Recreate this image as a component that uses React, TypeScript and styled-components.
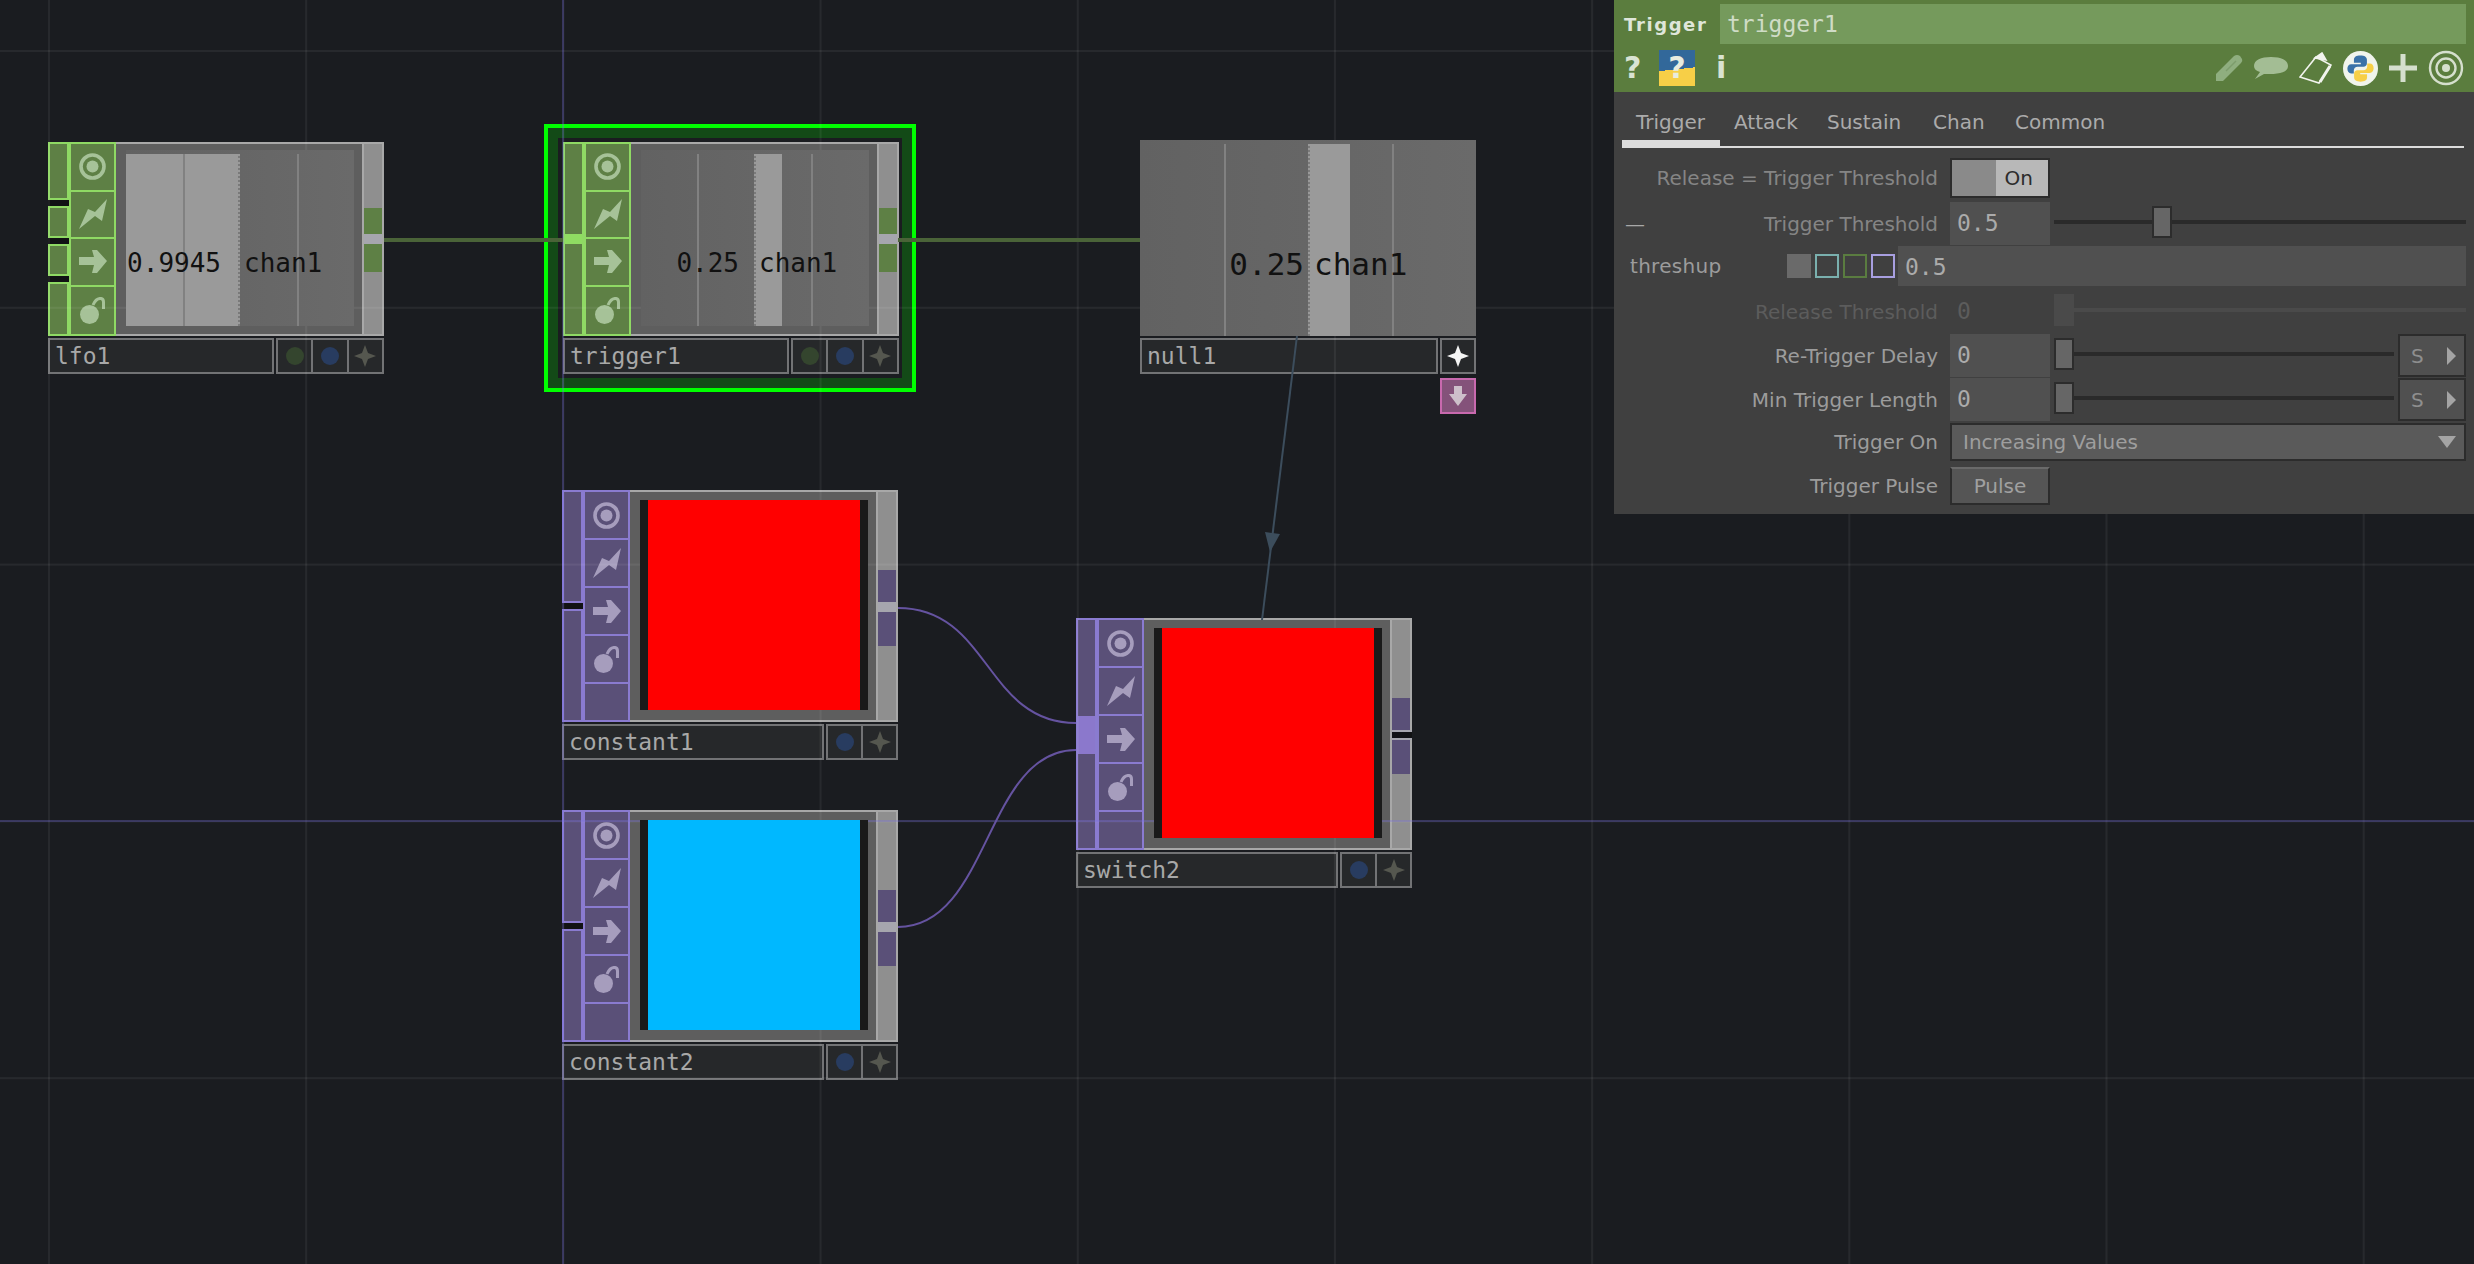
import React from 'react'
import styled, { createGlobalStyle, css } from 'styled-components'

const MONO = `"DejaVu Sans Mono", "Liberation Mono", monospace`
const SANS = `"DejaVu Sans", "Liberation Sans", sans-serif`

type Family = 'chop' | 'top'

const palette = {
  chop: { line: '#8fd964', fill: '#5e8045', lit: '#8fdc62', glyph: '#a6c298' },
  top: { line: '#8a7bd0', fill: '#5a5078', lit: '#8b78cc', glyph: '#a69dbd' },
}

const GlobalStyle = createGlobalStyle`
  html, body {
    margin: 0;
    padding: 0;
    background: #1a1c20;
    overflow: hidden;
  }
`

const Canvas = styled.div`
  position: relative;
  width: 2474px;
  height: 1264px;
  overflow: hidden;
  background: #1a1c20;
`

const GridLines = styled.div`
  position: absolute;
  inset: 0;
  z-index: 2;
  pointer-events: none;
  background-image:
    linear-gradient(to right, rgba(110, 100, 220, 0.3), rgba(110, 100, 220, 0.3)),
    linear-gradient(to right, rgba(110, 100, 220, 0.3), rgba(110, 100, 220, 0.3)),
    linear-gradient(to right, rgba(255, 255, 255, 0.06) 2px, transparent 2px),
    linear-gradient(to bottom, rgba(255, 255, 255, 0.06) 2px, transparent 2px);
  background-size: 2px 100%, 100% 2px, 257.2px 100%, 100% 256.8px;
  background-position: 562px 0, 0 820px, 48px 0, 0 50px;
  background-repeat: no-repeat, no-repeat, repeat, repeat;
`

const Wires = styled.svg`
  position: absolute;
  inset: 0;
  z-index: 2;
  pointer-events: none;
`

const SelectionFrame = styled.div`
  position: absolute;
  left: 544px;
  top: 124px;
  width: 372px;
  height: 268px;
  box-sizing: border-box;
  border: 4px solid #00ff00;
  background: #134a17;
  &::before {
    content: '';
    position: absolute;
    inset: 10px;
    background: #1a1c20;
  }
`

const Node = styled.div<{ $x: number; $y: number }>`
  position: absolute;
  left: ${p => p.$x}px;
  top: ${p => p.$y}px;
  width: 336px;
`

const Body = styled.div<{ $h: number }>`
  display: flex;
  height: ${p => p.$h}px;
`

const InputColumn = styled.div<{ $gap: number }>`
  flex: none;
  width: 21px;
  display: flex;
  flex-direction: column;
  gap: ${p => p.$gap}px;
  background: #111214;
`

const InputSlot = styled.div<{ $family: Family; $h?: number; $part?: 'first' | 'mid' | 'last' }>`
  box-sizing: border-box;
  width: 21px;
  ${p => (p.$h ? `height: ${p.$h}px;` : 'flex: 1;')}
  background: ${p => (p.$part === 'mid' ? palette[p.$family].lit : palette[p.$family].fill)};
  border: 2px solid ${p => palette[p.$family].line};
  ${p => p.$part === 'first' && 'border-bottom: 0;'}
  ${p => p.$part === 'mid' && 'border-top: 0; border-bottom: 0;'}
  ${p => p.$part === 'last' && 'border-top: 0;'}
`

const IconColumn = styled.div<{ $family: Family }>`
  box-sizing: border-box;
  flex: none;
  width: 47px;
  display: flex;
  flex-direction: column;
  gap: 2px;
  background: ${p => palette[p.$family].line};
  border: 2px solid ${p => palette[p.$family].line};
  border-left-width: 0;
  color: ${p => palette[p.$family].glyph};
`

const IconCell = styled.div<{ $family: Family; $grow?: boolean }>`
  ${p => (p.$grow ? 'flex: 1;' : `height: ${p.$family === 'top' ? 46 : 45.5}px;`)}
  display: flex;
  align-items: center;
  justify-content: center;
  background: ${p => palette[p.$family].fill};
  border-left: 2px solid ${p => palette[p.$family].line};
`

const ViewerArea = styled.div`
  box-sizing: border-box;
  flex: 1;
  background: #5e5e5e;
  border-top: 2px solid #a8a8a8;
  border-bottom: 2px solid #a8a8a8;
  padding: 6px 8px 8px 10px;
  display: flex;
`

const Chart = styled.div`
  position: relative;
  z-index: 3;
  flex: 1;
  overflow: hidden;
  background: linear-gradient(to right, #626262, #6a6a6a);
  font-family: ${MONO};
  color: #111;
`

const ChartBar = styled.div<{ $left: number; $w: number; $edge: 'left' | 'right' }>`
  position: absolute;
  top: 4px;
  bottom: 0;
  left: ${p => p.$left}px;
  width: ${p => p.$w}px;
  background: #9a9a9a;
  &::after {
    content: '';
    position: absolute;
    top: 0;
    bottom: 0;
    ${p => p.$edge}: 0;
    width: 2px;
    background: repeating-linear-gradient(to bottom, #9a9a9a 0 2px, #7a7a7a 2px 4px);
  }
`

const ChartMark = styled.div<{ $left: number }>`
  position: absolute;
  top: 4px;
  bottom: 0;
  left: ${p => p.$left}px;
  width: 2px;
  background: #818181;
`

const ChartText = styled.div<{ $large?: boolean }>`
  position: absolute;
  left: 0;
  top: ${p => (p.$large ? 104 : 95)}px;
  display: flex;
  font-size: ${p => (p.$large ? 31 : 26)}px;
  line-height: ${p => (p.$large ? 40 : 36)}px;
  white-space: pre;
`

const ChartValue = styled.span<{ $w: number }>`
  box-sizing: border-box;
  width: ${p => p.$w}px;
  text-align: right;
`

const ChartChan = styled.span<{ $gap: number }>`
  margin-left: ${p => p.$gap}px;
`

const Swatch = styled.div<{ $color: string }>`
  position: relative;
  z-index: 3;
  flex: 1;
  margin: 2px 0;
  background: #1a1a1a;
  padding: 0 8px;
  display: flex;
  &::after {
    content: '';
    flex: 1;
    background: ${p => p.$color};
  }
`

const OutputStrip = styled.div`
  box-sizing: border-box;
  flex: none;
  width: 22px;
  display: flex;
  flex-direction: column;
  align-items: stretch;
  background: #8f8f8f;
  border: 2px solid #a8a8a8;
`

const OutputPort = styled.div<{ $family: Family; $top: number; $h: number }>`
  margin-top: ${p => p.$top}px;
  height: ${p => p.$h}px;
  background: ${p => palette[p.$family].fill};
`

const PortGap = styled.div<{ $dark?: boolean; $h: number }>`
  box-sizing: border-box;
  height: ${p => p.$h}px;
  ${p =>
    p.$dark
      ? css`
          margin-right: -2px;
          background: #111214;
          border-top: 2px solid #a6a6ae;
          border-bottom: 2px solid #a6a6ae;
        `
      : css`
          background: #a6a6ae;
        `}
`

const NameRow = styled.div`
  display: flex;
  gap: 2px;
  height: 36px;
  margin-top: 2px;
`

const NameField = styled.div`
  box-sizing: border-box;
  flex: 1;
  padding-left: 5px;
  border: 2px solid #727375;
  background: #26282a;
  color: #a8a8a8;
  font-family: ${MONO};
  font-size: 23px;
  line-height: 33px;
`

const ButtonBox = styled.div<{ $n: number }>`
  box-sizing: border-box;
  width: ${p => p.$n * 36}px;
  display: flex;
  border: 2px solid #727375;
  background: #26282a;
`

const ButtonCell = styled.div`
  flex: 1;
  display: flex;
  align-items: center;
  justify-content: center;
  & + & {
    border-left: 2px solid #727375;
  }
`

const Dot = styled.span<{ $color: string }>`
  width: 18px;
  height: 18px;
  border-radius: 50%;
  background: ${p => p.$color};
`

const ViewerButton = styled.div`
  box-sizing: border-box;
  width: 36px;
  height: 36px;
  margin: 4px 0 0 auto;
  display: flex;
  align-items: center;
  justify-content: center;
  background: #84527a;
  border: 2px solid #c869ae;
  color: #cdbfca;
`

/* panel */

const Panel = styled.div`
  position: absolute;
  z-index: 5;
  left: 1614px;
  top: 0;
  width: 860px;
  height: 514px;
  background: #404040;
  font-family: ${SANS};
`

const PanelHeader = styled.div`
  height: 92px;
  box-sizing: border-box;
  padding: 4px 8px 0 10px;
  background: #5b7d3e;
`

const TitleRow = styled.div`
  display: flex;
  align-items: center;
  height: 40px;
`

const TypeName = styled.div`
  width: 96px;
  color: #dfe6da;
  font-size: 18px;
  font-weight: bold;
  letter-spacing: 1.6px;
`

const OpName = styled.div`
  flex: 1;
  height: 40px;
  padding-left: 7px;
  background: #759a5c;
  color: #cfdcc6;
  font-family: ${MONO};
  font-size: 23px;
  line-height: 41px;
`

const ToolRow = styled.div`
  display: flex;
  align-items: center;
  height: 40px;
  margin-top: 4px;
  color: #d9e3d2;
`

const HelpMark = styled.span`
  width: 35px;
  font-size: 30px;
  font-weight: bold;
  line-height: 36px;
`

const PythonHelp = styled.span`
  width: 36px;
  height: 36px;
  margin-right: 21px;
  text-align: center;
  font-size: 30px;
  font-weight: bold;
  line-height: 36px;
  color: #e8ecdf;
  background: linear-gradient(174deg, #32689a 0 53%, #f7cf47 53% 100%);
`

const InfoMark = styled.span`
  font-size: 30px;
  font-weight: bold;
  line-height: 36px;
`

const ToolIcons = styled.div`
  margin-left: auto;
  margin-right: 2px;
  display: flex;
  align-items: center;
  gap: 11px;
`

const TabBar = styled.div`
  display: flex;
  height: 48px;
  margin: 0 10px 0 8px;
  border-bottom: 2px solid #dcdcdc;
  box-sizing: content-box;
  padding-top: 6px;
`

const Tab = styled.div<{ $active?: boolean; $w: number }>`
  position: relative;
  width: ${p => p.$w}px;
  box-sizing: border-box;
  padding-left: 14px;
  color: #ababab;
  font-size: 20px;
  line-height: 48px;
  ${p =>
    p.$active &&
    css`
      &::after {
        content: '';
        position: absolute;
        left: 0;
        right: 0;
        bottom: 0;
        height: 6px;
        background: #dcdcdc;
      }
    `}
`

const ParamList = styled.div`
  display: flex;
  flex-direction: column;
  gap: 4px;
  margin-top: 10px;
  padding-right: 8px;
`

const Row = styled.div`
  display: grid;
  grid-template-columns: 336px 1fr;
  height: 40px;
`

const Label = styled.div<{ $tone?: 'dim' | 'off' }>`
  display: flex;
  align-items: center;
  justify-content: flex-end;
  padding-right: 12px;
  font-size: 20px;
  white-space: nowrap;
  color: ${p => (p.$tone === 'off' ? '#5c5c5c' : p.$tone === 'dim' ? '#858585' : '#9c9c9c')};
`

const Dash = styled.span`
  margin-right: auto;
  margin-left: 11px;
  color: #a8a8a8;
`

const Controls = styled.div`
  display: flex;
  align-items: stretch;
  gap: 4px;
`

const Toggle = styled.div`
  box-sizing: border-box;
  width: 100px;
  display: flex;
  border: 2px solid #2c2c2c;
`

const ToggleOff = styled.div`
  flex: 1;
  background: #8a8a8a;
`

const ToggleOn = styled.div`
  flex: 1;
  background: #b8b8b8;
  color: #2c2c2c;
  font-size: 20px;
  line-height: 36px;
  padding-left: 9px;
`

const Field = styled.div<{ $off?: boolean }>`
  box-sizing: border-box;
  width: 100px;
  padding-left: 7px;
  background: ${p => (p.$off ? 'transparent' : '#505050')};
  color: ${p => (p.$off ? '#5c5c5c' : '#ababab')};
  font-family: ${MONO};
  font-size: 23px;
  line-height: 43px;
`

const Slider = styled.div<{ $off?: boolean }>`
  position: relative;
  flex: 1;
  &::before {
    content: '';
    position: absolute;
    left: 0;
    right: 0;
    top: 18px;
    height: 4px;
    background: ${p => (p.$off ? '#4a4a4a' : '#2a2a2a')};
  }
`

const Thumb = styled.div<{ $left: number; $off?: boolean }>`
  position: absolute;
  box-sizing: border-box;
  left: ${p => p.$left}px;
  top: 4px;
  width: 20px;
  height: 32px;
  background: ${p => (p.$off ? '#4a4a4a' : '#666')};
  border: 2px solid ${p => (p.$off ? '#4a4a4a' : '#2c2c2c')};
`

const UnitButton = styled.div`
  box-sizing: border-box;
  width: 68px;
  display: flex;
  align-items: center;
  justify-content: space-between;
  padding: 0 8px 0 11px;
  background: #505050;
  border: 2px solid #2c2c2c;
  color: #8e8e8e;
  font-size: 20px;
`

const ArrowRight = styled.span`
  border-left: 9px solid #a4a4a4;
  border-top: 9px solid transparent;
  border-bottom: 9px solid transparent;
`

const ThreshRow = styled.div`
  display: flex;
  align-items: center;
  height: 40px;
  padding-left: 16px;
`

const ThreshName = styled.div`
  width: 157px;
  color: #9c9c9c;
  font-size: 20px;
  letter-spacing: 0.3px;
`

const Squares = styled.div`
  width: 111px;
  display: flex;
  gap: 4px;
`

const Square = styled.span<{ $line: string; $fill?: string }>`
  box-sizing: border-box;
  width: 24px;
  height: 24px;
  border: 2px solid ${p => p.$line};
  background: ${p => p.$fill || 'transparent'};
`

const ThreshField = styled.div`
  flex: 1;
  height: 40px;
  padding-left: 7px;
  background: #505050;
  color: #ababab;
  font-family: ${MONO};
  font-size: 23px;
  line-height: 42px;
`

const Dropdown = styled.div`
  flex: 1;
  box-sizing: border-box;
  margin: 1px 0;
  display: flex;
  align-items: center;
  justify-content: space-between;
  padding: 0 8px 0 11px;
  background: #5a5a5a;
  border: 2px solid #2c2c2c;
  color: #9e9e9e;
  font-size: 20px;
`

const ArrowDown = styled.span`
  border-top: 12px solid #a4a4a4;
  border-left: 9px solid transparent;
  border-right: 9px solid transparent;
`

const PulseButton = styled.div`
  box-sizing: border-box;
  width: 100px;
  margin: 1px 0;
  text-align: center;
  background: #555;
  border: 2px solid #2c2c2c;
  border-top-color: #6a6a6a;
  color: #a0a0a0;
  font-size: 20px;
  line-height: 34px;
`

/* drawings */

const Target = () => (
  <svg width="27" height="27" viewBox="0 0 27 27" fill="currentColor">
    <circle cx="13.5" cy="13.5" r="11.5" fill="none" stroke="currentColor" strokeWidth="3.6" />
    <circle cx="13.5" cy="13.5" r="6" />
  </svg>
)

const Bolt = () => (
  <svg width="28" height="30" viewBox="0 0 28 30" fill="currentColor">
    <path d="M0 30 L9 10 L16 13 L28 0 L23 22 L16 17 Z" />
  </svg>
)

const Arrow = () => (
  <svg width="28" height="23" viewBox="0 0 28 23" fill="currentColor">
    <path d="M0 7 H15 L13 0 H18 L28 11 L18 23 H13 L15 15 H0 Z" />
  </svg>
)

const Bomb = () => (
  <svg width="25" height="27" viewBox="0 0 25 27" fill="currentColor">
    <circle cx="9.5" cy="17.5" r="9.5" />
    <path d="M13 8 Q16 1 21 1.5 Q23.5 2 23.5 5 V12" fill="none" stroke="currentColor" strokeWidth="3" />
  </svg>
)

const Sparkle = ({ color }: { color: string }) => (
  <svg width="22" height="22" viewBox="0 0 22 22" fill={color}>
    <path d="M11 0 L14 8 L22 11 L14 14 L11 22 L8 14 L0 11 L8 8 Z" />
  </svg>
)

const DownArrow = () => (
  <svg width="18" height="20" viewBox="0 0 18 20" fill="currentColor">
    <path d="M5 0 H13 V8 H18 L9 20 L0 8 H5 Z" />
  </svg>
)

const Pencil = () => (
  <svg width="28" height="28" viewBox="0 0 28 28" fill="#8fae7f">
    <path d="M1 20 L19 2 Q22 0 25 2 L27 5 Q28 7 26 9 L8 27 H1 Z" />
    <path d="M11 17 L21 7" stroke="#7d9c6c" strokeWidth="1.5" />
  </svg>
)

const Bubble = () => (
  <svg width="34" height="26" viewBox="0 0 34 26" fill="#a3bd94">
    <path d="M17 2 C27 2 34 5 34 11 C34 17 26 19 16 19 C13 19 11 19 10 19 L1 24 L6 17 C2 16 0 14 0 11 C0 5 7 2 17 2 Z" />
  </svg>
)

const NoteIcon = () => (
  <svg width="33" height="32" viewBox="0 0 33 32" fill="none" stroke="#f2f4ee" strokeWidth="1.6">
    <path d="M17 5 L32 13 L20 31 L1 25 Z" />
    <path d="M16 6 L23 1 L27 8 Z" fill="#f2f4ee" />
    <path d="M31 14 L21 30" strokeWidth="3" />
  </svg>
)

const SNAKE =
  'M12 3 C9 3 7.5 4 7.5 6 V8 H12.2 V9 H5.6 C4 9 3 10.4 3 12.2 C3 14 4 15.4 5.6 15.4 H7.4 V13.4 C7.4 11.8 8.6 10.8 10 10.8 H14 C15.4 10.8 16.4 9.8 16.4 8.4 V6 C16.4 4 14.6 3 12 3 Z'

const PythonLogo = () => (
  <svg width="35" height="35" viewBox="0 0 24 24">
    <circle cx="12" cy="12" r="12" fill="#f0f4ec" />
    <path fill="#3a72a8" d={SNAKE} />
    <path fill="#f7cf47" transform="rotate(180 12 12)" d={SNAKE} />
  </svg>
)

const PlusIcon = () => (
  <svg width="28" height="28" viewBox="0 0 28 28" fill="#d5dfcd">
    <path d="M11.5 0 H16.5 V11.5 H28 V16.5 H16.5 V28 H11.5 V16.5 H0 V11.5 H11.5 Z" />
  </svg>
)

const Rings = () => (
  <svg width="36" height="36" viewBox="0 0 36 36" fill="none" stroke="#d5dfcd" strokeWidth="2.4">
    <circle cx="18" cy="18" r="16" />
    <circle cx="18" cy="18" r="9.5" />
    <circle cx="18" cy="18" r="4" fill="#d5dfcd" stroke="none" />
  </svg>
)

const WireLayer = () => (
  <Wires width="2474" height="1264">
    <path d="M384 240 H563" stroke="#4a6338" strokeWidth="4" fill="none" />
    <path d="M898 240 H1140" stroke="#4a6338" strokeWidth="4" fill="none" />
    <path d="M1297 336 L1262 620" stroke="#3c4d5c" strokeWidth="2" fill="none" />
    <path d="M1265 532 L1280 534 L1270 552 Z" fill="#3c4d5c" />
    <path d="M898 608 C990 608 985 723 1076 723" stroke="#6553a0" strokeWidth="2" fill="none" />
    <path d="M898 927 C990 927 985 750 1076 750" stroke="#6553a0" strokeWidth="2" fill="none" />
  </Wires>
)

/* parts */

const Inputs = ({ family, slots, lit }: { family: Family; slots?: number[]; lit?: [number, number] }) => {
  if (lit) {
    return (
      <InputColumn $gap={0}>
        <InputSlot $family={family} $part="first" $h={lit[0]} />
        <InputSlot $family={family} $part="mid" $h={lit[1]} />
        <InputSlot $family={family} $part="last" />
      </InputColumn>
    )
  }
  return (
    <InputColumn $gap={6}>
      {(slots || []).map((h, i) => (
        <InputSlot key={i} $family={family} $h={h} />
      ))}
    </InputColumn>
  )
}

const Icons = ({ family, spare }: { family: Family; spare?: boolean }) => (
  <IconColumn $family={family}>
    <IconCell $family={family}><Target /></IconCell>
    <IconCell $family={family}><Bolt /></IconCell>
    <IconCell $family={family}><Arrow /></IconCell>
    <IconCell $family={family} $grow={!spare}><Bomb /></IconCell>
    {spare && <IconCell $family={family} $grow />}
  </IconColumn>
)

const Name = ({ name, bright, dots = 3 }: { name: string; bright?: boolean; dots?: number }) => (
  <NameRow>
    <NameField>{name}</NameField>
    <ButtonBox $n={dots}>
      {dots === 3 && <ButtonCell><Dot $color="#34452e" /></ButtonCell>}
      {dots >= 2 && <ButtonCell><Dot $color="#283c60" /></ButtonCell>}
      <ButtonCell><Sparkle color={bright ? '#f4f4f4' : '#55574f'} /></ButtonCell>
    </ButtonBox>
  </NameRow>
)

type ChopProps = {
  x: number
  y: number
  name: string
  value: string
  valueWidth: number
  chanGap: number
  bar: [number, number]
  edge: 'left' | 'right'
  marks: number[]
  slots?: number[]
  lit?: [number, number]
}

const ChopNode = ({ x, y, name, value, valueWidth, chanGap, bar, edge, marks, slots, lit }: ChopProps) => (
  <Node $x={x} $y={y}>
    <Body $h={194}>
      <Inputs family="chop" slots={slots} lit={lit} />
      <Icons family="chop" />
      <ViewerArea>
        <Chart>
          <ChartBar $left={bar[0]} $w={bar[1]} $edge={edge} />
          {marks.map(m => <ChartMark key={m} $left={m} />)}
          <ChartText>
            <ChartValue $w={valueWidth}>{value}</ChartValue>
            <ChartChan $gap={chanGap}>chan1</ChartChan>
          </ChartText>
        </Chart>
      </ViewerArea>
      <OutputStrip>
        <OutputPort $family="chop" $top={64} $h={26} />
        <PortGap $h={10} />
        <OutputPort $family="chop" $top={0} $h={28} />
      </OutputStrip>
    </Body>
    <Name name={name} />
  </Node>
)

type TopProps = {
  x: number
  y: number
  name: string
  color: string
  lit?: [number, number]
  darkGap?: boolean
}

const TopNode = ({ x, y, name, color, lit, darkGap }: TopProps) => (
  <Node $x={x} $y={y}>
    <Body $h={232}>
      <Inputs family="top" slots={[113, 113]} lit={lit} />
      <Icons family="top" spare />
      <ViewerArea>
        <Swatch $color={color} />
      </ViewerArea>
      <OutputStrip>
        <OutputPort $family="top" $top={78} $h={32} />
        <PortGap $dark={darkGap} $h={10} />
        <OutputPort $family="top" $top={0} $h={34} />
      </OutputStrip>
    </Body>
    <Name name={name} dots={2} />
  </Node>
)

const NullChart = styled(Chart)`
  flex: none;
  height: 196px;
`

const NullNode = () => (
  <Node $x={1140} $y={140}>
    <NullChart>
      <ChartBar $left={168} $w={42} $edge="left" />
      <ChartMark $left={84} />
      <ChartMark $left={252} />
      <ChartText $large>
        <ChartValue $w={164}>0.25</ChartValue>
        <ChartChan $gap={10}>chan1</ChartChan>
      </ChartText>
    </NullChart>
    <Name name="null1" bright dots={1} />
    <ViewerButton><DownArrow /></ViewerButton>
  </Node>
)

const SliderRow = ({ label, value, thumb }: { label: string; value: string; thumb: number }) => (
  <Row>
    <Label>{label}</Label>
    <Controls>
      <Field>{value}</Field>
      <Slider><Thumb $left={thumb} /></Slider>
      <UnitButton>S<ArrowRight /></UnitButton>
    </Controls>
  </Row>
)

const ParamPanel = () => (
  <Panel>
    <PanelHeader>
      <TitleRow>
        <TypeName>Trigger</TypeName>
        <OpName>trigger1</OpName>
      </TitleRow>
      <ToolRow>
        <HelpMark>?</HelpMark>
        <PythonHelp>?</PythonHelp>
        <InfoMark>i</InfoMark>
        <ToolIcons>
          <Pencil />
          <Bubble />
          <NoteIcon />
          <PythonLogo />
          <PlusIcon />
          <Rings />
        </ToolIcons>
      </ToolRow>
    </PanelHeader>
    <TabBar>
      <Tab $active $w={98}>Trigger</Tab>
      <Tab $w={93}>Attack</Tab>
      <Tab $w={106}>Sustain</Tab>
      <Tab $w={82}>Chan</Tab>
      <Tab $w={110}>Common</Tab>
    </TabBar>
    <ParamList>
      <Row>
        <Label $tone="dim">Release = Trigger Threshold</Label>
        <Controls>
          <Toggle>
            <ToggleOff />
            <ToggleOn>On</ToggleOn>
          </Toggle>
        </Controls>
      </Row>
      <Row>
        <Label $tone="dim"><Dash>—</Dash>Trigger Threshold</Label>
        <Controls>
          <Field>0.5</Field>
          <Slider><Thumb $left={98} /></Slider>
        </Controls>
      </Row>
      <ThreshRow>
        <ThreshName>threshup</ThreshName>
        <Squares>
          <Square $line="#6a6a6a" $fill="#6a6a6a" />
          <Square $line="#7ab0ae" />
          <Square $line="#5a7c40" />
          <Square $line="#a89fe0" />
        </Squares>
        <ThreshField>0.5</ThreshField>
      </ThreshRow>
      <Row>
        <Label $tone="off">Release Threshold</Label>
        <Controls>
          <Field $off>0</Field>
          <Slider $off><Thumb $left={0} $off /></Slider>
        </Controls>
      </Row>
      <SliderRow label="Re-Trigger Delay" value="0" thumb={0} />
      <SliderRow label="Min Trigger Length" value="0" thumb={0} />
      <Row>
        <Label>Trigger On</Label>
        <Controls>
          <Dropdown>Increasing Values<ArrowDown /></Dropdown>
        </Controls>
      </Row>
      <Row>
        <Label>Trigger Pulse</Label>
        <Controls>
          <PulseButton>Pulse</PulseButton>
        </Controls>
      </Row>
    </ParamList>
  </Panel>
)

const App: React.FC = () => (
  <Canvas>
    <GlobalStyle />
    <SelectionFrame />
    <ChopNode
      x={48}
      y={142}
      name="lfo1"
      value="0.9945"
      valueWidth={95}
      chanGap={23}
      bar={[0, 114]}
      edge="right"
      marks={[57, 171]}
      slots={[58, 32, 32, 54]}
    />
    <ChopNode
      x={563}
      y={142}
      name="trigger1"
      value="0.25"
      valueWidth={98}
      chanGap={20}
      bar={[113, 28]}
      edge="left"
      marks={[56, 170]}
      lit={[92, 10]}
    />
    <NullNode />
    <TopNode x={562} y={490} name="constant1" color="#ff0000" />
    <TopNode x={562} y={810} name="constant2" color="#00b8ff" />
    <TopNode x={1076} y={618} name="switch2" color="#ff0000" lit={[98, 38]} darkGap />
    <GridLines />
    <WireLayer />
    <ParamPanel />
  </Canvas>
)

export default App
